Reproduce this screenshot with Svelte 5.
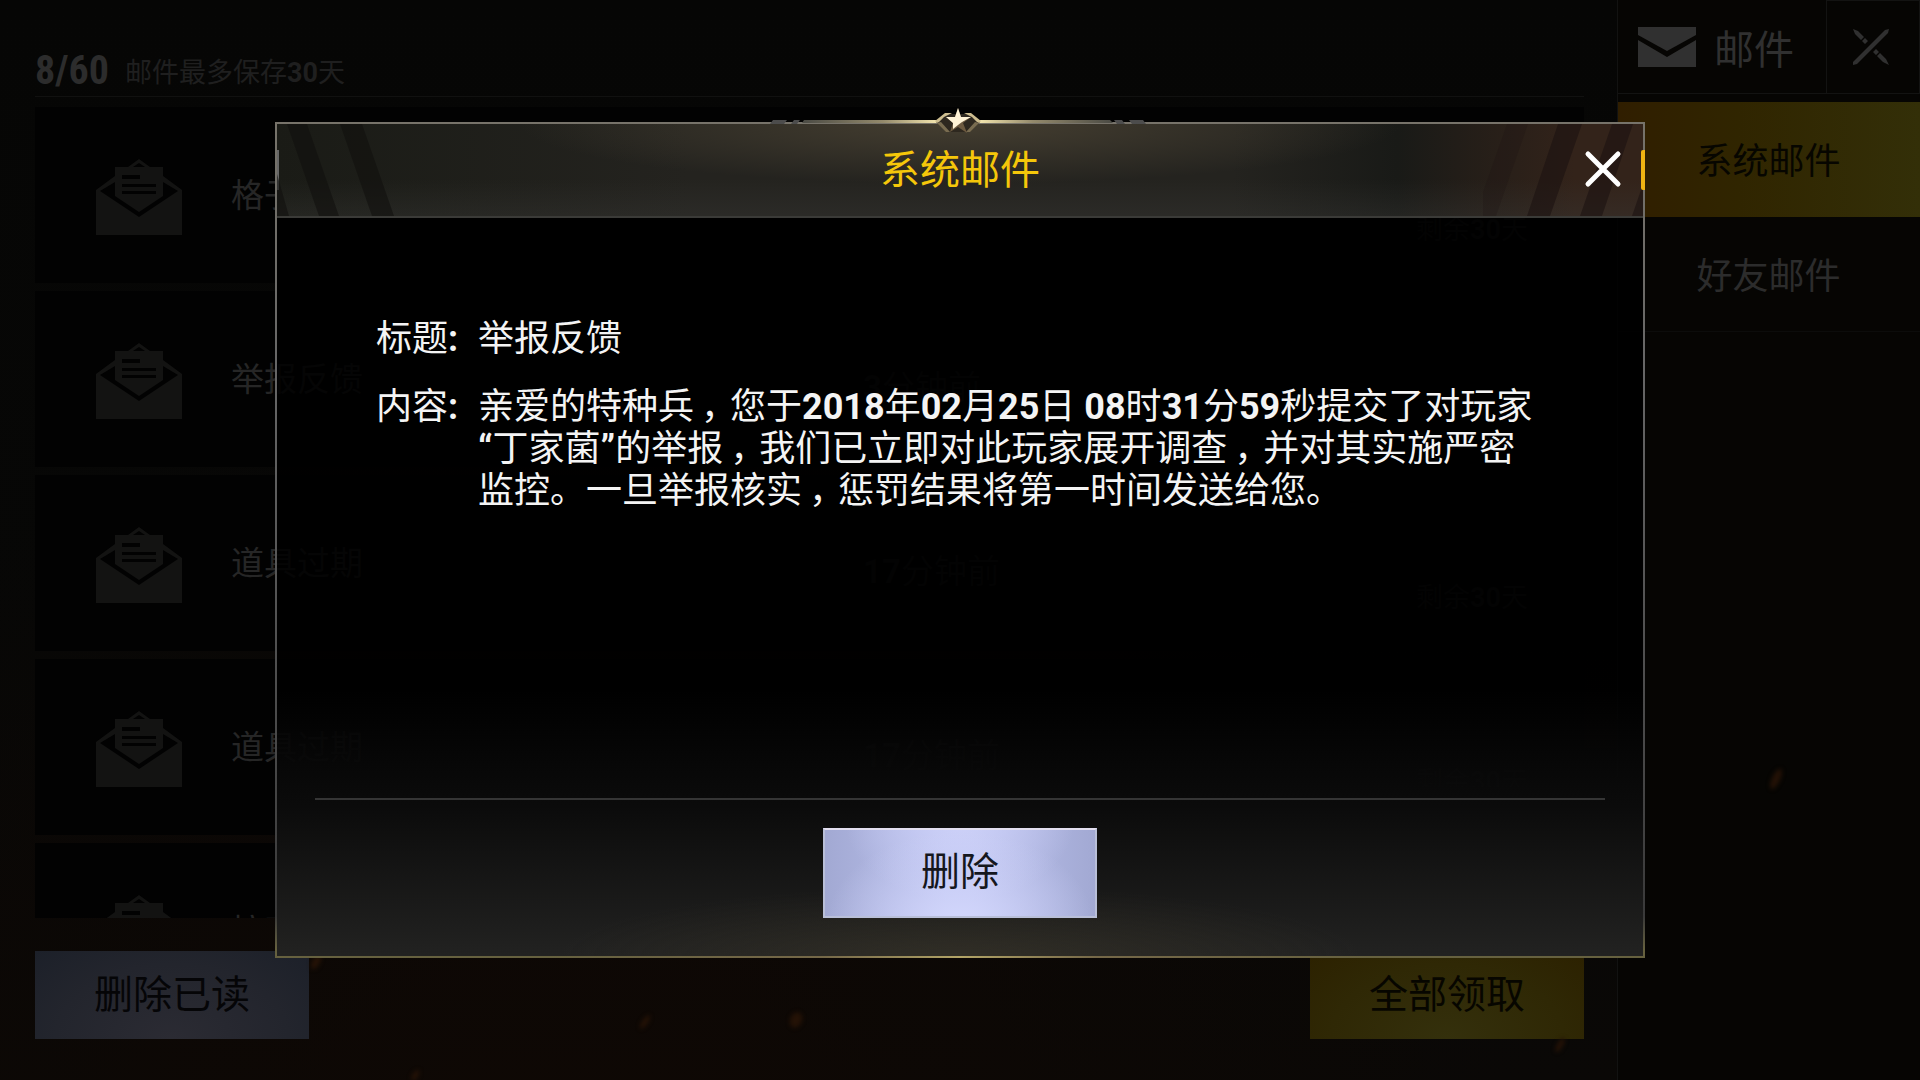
<script>
  const mails = [
    { title: '格子衬衫', time: '', left: '剩余30天' },
    { title: '举报反馈', time: '3分钟前', left: '' },
    { title: '道具过期', time: '17分钟前', left: '剩余30天' },
    { title: '道具过期', time: '17分钟前', left: '剩余30天' },
    { title: '按时领取', time: '', left: '' },
  ];

  const tabs = ['系统邮件', '好友邮件'];
  let active = $state(0);

  const body = [
    '亲爱的特种兵，您于2018年02月25日 08时31分59秒提交了对玩家',
    '“丁家菌”的举报，我们已立即对此玩家展开调查，并对其实施严密',
    '监控。一旦举报核实，惩罚结果将第一时间发送给您。',
  ];

  // digits and quotes use the bold latin face, commas sit mid-cell
  const split = (line) => line.split(/([ \d“”]+|，)/).filter(Boolean);
</script>

<div class="screen">
  <main class="inbox">
    <header class="count">
      <strong>8/60</strong>
      <span>邮件最多保存<b>30</b>天</span>
    </header>

    <ul class="list">
      {#each mails as mail}
        <li class="row">
          <svg class="letter" viewBox="0 0 86 76">
            <path d="M0 31 19 17v6L4 32l39 26 39-26-15-9v-6l19 14v45H0z" />
            <path d="M32 8 43 0l11 8h-5l-6-4-6 4z" />
            <path fill-rule="evenodd" d="M19 8h48v29L43 53 19 37zM26 16v4h18v-4zM26 25v3h34v-3zM26 32v3h34v-3z" />
          </svg>
          <span class="name">{mail.title}</span>
          <span class="time">{#each split(mail.time) as part}{#if /\d/.test(part)}<b>{part}</b>{:else}{part}{/if}{/each}</span>
          <span class="left">{#each split(mail.left) as part}{#if /\d/.test(part)}<b>{part}</b>{:else}{part}{/if}{/each}</span>
        </li>
      {/each}
    </ul>

    <footer class="actions">
      <button class="btn dim-blue">删除已读</button>
      <button class="btn dim-gold">全部领取</button>
    </footer>
  </main>

  <aside class="side">
    <div class="side-head">
      <h1>
        <svg width="58" height="40" viewBox="0 0 58 40">
          <path d="M0 0h58v8L29 24 0 8zM0 13l29 17 29-17v27H0z" />
        </svg>
        <span>邮件</span>
      </h1>
      <button class="exit" aria-label="关闭邮件">
        <svg width="38" height="38" viewBox="0 0 38 38">
          <path d="M1 34 33 2l4-1-1 4L5 36l-4 1z" />
          <path d="M1 1l5 2 6 6-3 3-6-6zM13 10l3 3-3 3-3-3zM24 21l3 3-3 3-3-3zM28 25l6 6 3 6-6-3-6-6z" />
        </svg>
      </button>
    </div>
    <nav>
      {#each tabs as tab, i}
        <button class="tab" class:active={active === i} onclick={() => (active = i)}>{tab}</button>
      {/each}
    </nav>
  </aside>

  <svg class="sparks" viewBox="0 0 1920 1080" preserveAspectRatio="none">
    <ellipse cx="1776" cy="779" rx="4" ry="11" transform="rotate(25 1776 779)" />
    <ellipse cx="796" cy="1020" rx="6" ry="8" transform="rotate(25 796 1020)" />
    <ellipse cx="645" cy="1022" rx="3" ry="8" transform="rotate(35 645 1022)" />
    <ellipse cx="316" cy="962" rx="4" ry="8" transform="rotate(30 316 962)" />
    <ellipse cx="415" cy="1076" rx="3" ry="7" transform="rotate(30 415 1076)" />
    <ellipse cx="1560" cy="1045" rx="3" ry="8" transform="rotate(30 1560 1045)" />
  </svg>

  <div class="overlay">
    <div class="modal" role="dialog" aria-labelledby="mail-title">
      <svg class="crest" width="380" height="30" viewBox="0 0 380 30">
        <defs>
          <linearGradient id="lineL"><stop offset="0" stop-color="#4a4a44" /><stop offset=".6" stop-color="#948a6c" /><stop offset="1" stop-color="#f4e6ae" /></linearGradient>
          <linearGradient id="lineR"><stop offset="0" stop-color="#f4e6ae" /><stop offset=".4" stop-color="#948a6c" /><stop offset="1" stop-color="#4a4a44" /></linearGradient>
        </defs>
        <path d="M2 16l3-4h14l-3 4zM23 16l3-4h6l-3 4zM378 16l-3-4h-14l3 4zM357 16l-3-4h-8l3 4z" fill="#4c4c4c" />
        <path d="M36 12h133v3H34z" fill="url(#lineL)" />
        <path d="M211 12h131l3 3H211z" fill="url(#lineR)" />
        <path d="M168 14l9-8h26l9 8-10 10h-24z" fill="#2e281f" />
        <path d="M167 13l10-8h7l-8 4-5 5-2 1zM213 13l-10-8h-7l8 4 5 5 2 1z" fill="#cdbd8f" />
        <path d="M169 15l9 9h4l-9-10zM211 15l-9 9h-4l9-10z" fill="#796c50" />
        <path d="M190 0l3 9 10 0-8 6 4 10-9-6-8 5 3-9-7-6h9z" fill="#6d5a40" />
        <path d="M190 0l3 9 10 0-9 5-4 3-5 4 0-6-7-6h9z" fill="#fff3d6" />
      </svg>
      <header class="modal-head">
        <svg class="stripes" width="140" height="92" viewBox="0 0 140 92">
          <path d="M10 0h20l32 92H42zM63 0h22l32 92H95zM0 50l12 42H0z" />
        </svg>
        <h2 id="mail-title">系统邮件</h2>
        <svg class="stripes right" width="160" height="92" viewBox="0 0 160 92">
          <path d="M24 0h21L13 92H0V68z" opacity=".4" />
          <path d="M75 0h24L67 92H44zM129 0h21l-31 92H97zM160 60v32h-11z" />
        </svg>
        <button class="close" aria-label="关闭">
          <svg width="38" height="38" viewBox="0 0 38 38">
            <path d="M4 4l30 30M34 4 4 34" />
          </svg>
        </button>
      </header>

      <dl class="mail">
        <dt>标题<b>:</b></dt>
        <dd>举报反馈</dd>
        <dt>内容<b>:</b></dt>
        <dd>
          {#each body as line}
            <p>{#each split(line) as part}{#if part === '，'}<span class="comma">，</span>{:else if /[\d“]|”/.test(part)}<b>{part}</b>{:else}{part}{/if}{/each}</p>
          {/each}
        </dd>
      </dl>

      <footer class="modal-foot">
        <button class="btn blue">删除</button>
      </footer>
    </div>
  </div>
</div>

<style>
  :global(body) {
    background: #060503;
  }
  .screen {
    position: relative;
    display: flex;
    height: 100vh;
    overflow: hidden;
    box-sizing: border-box;
    background:
      radial-gradient(ellipse at 30% 115%, #0f0804 0, transparent 50%),
      linear-gradient(#060605, #070706 60%, #0a0806);
    color: #2c2c2c;
    font-family: Roboto, 'Noto Sans CJK SC', sans-serif;
  }
  button {
    margin: 0;
    padding: 0;
    border: 0;
    background: none;
    color: inherit;
    font: inherit;
    cursor: pointer;
  }
  h1, h2, p, ul, dl, dd {
    margin: 0;
    padding: 0;
    font-weight: 400;
  }
  svg {
    display: block;
    fill: currentColor;
  }

  .inbox {
    flex: 1;
    display: flex;
    flex-direction: column;
    padding: 0 33px 41px 35px;
  }
  .count {
    display: flex;
    align-items: flex-end;
    gap: 16px;
    height: 96px;
    border-bottom: 1px solid #111110;
    font-size: 27px;
    line-height: 46px;
    color: #1f1f1f;
  }
  .count strong {
    font: 700 40px/50px 'Liberation Sans Narrow', 'Roboto Condensed', Roboto, sans-serif;
    color: #2c2c2c;
  }
  .list {
    flex: 1;
    min-height: 0;
    margin: 10px 0 33px;
    overflow: hidden;
    list-style: none;
  }
  .row {
    display: grid;
    grid-template-columns: 135px 632px 1fr 168px;
    align-items: center;
    height: 176px;
    margin-bottom: 8px;
    padding-left: 61px;
    background: #020202;
    font-size: 33px;
    color: #262626;
  }
  .letter {
    width: 86px;
    height: 76px;
    margin-top: 4px;
    color: #131312;
  }
  .name {
    padding-bottom: 4px;
  }
  .time {
    padding-top: 12px;
    color: #161616;
  }
  .left {
    padding-top: 64px;
    font-size: 27px;
    color: #161616;
  }
  .actions {
    display: flex;
    justify-content: space-between;
  }
  .btn {
    width: 274px;
    height: 88px;
    font-size: 39px;
    line-height: 84px;
  }
  .dim-blue {
    background: radial-gradient(ellipse at 50% 100%, #2b2b33, #23252d 60%, #1c2029);
    color: #050507;
  }
  .dim-gold {
    background: radial-gradient(ellipse at 50% 100%, #34300c, #2f2805 60%, #2c2100);
    color: #070600;
  }

  .side {
    width: 302px;
    border-left: 1px solid #121211;
    background: #060503;
  }
  .side-head {
    display: flex;
    height: 93px;
    margin-bottom: 8px;
    border-bottom: 1px solid #131312;
    color: #303030;
  }
  h1 {
    flex: 1;
    display: flex;
    align-items: center;
    gap: 18px;
    padding: 1px 0 0 20px;
    font-size: 40px;
  }
  .exit {
    display: grid;
    place-items: center;
    width: 94px;
    box-sizing: border-box;
    padding-right: 4px;
    border: 1px solid #131312;
    border-bottom: 0;
  }
  nav {
    display: flex;
    flex-direction: column;
  }
  .tab {
    height: 115px;
    padding: 0 1px 3px 0;
    border-bottom: 1px solid #0c0c0b;
    font-size: 36px;
  }
  .tab.active {
    border: 0;
    background: linear-gradient(90deg, #301e00, #302500 40%, #332f08);
    color: #070600;
  }

  .sparks {
    position: absolute;
    inset: 0;
    width: 100%;
    height: 100%;
    fill: #241206;
    filter: blur(2px);
    pointer-events: none;
  }
  .overlay {
    position: absolute;
    inset: 0;
    display: flex;
    justify-content: center;
    align-items: center;
  }
  .modal {
    position: relative;
    display: flex;
    flex-direction: column;
    width: 1370px;
    min-height: 836px;
    box-sizing: border-box;
    border: 2px solid;
    border-image: linear-gradient(#77736a, #666 30%, #3a3a3a 95%, #66613f 99%) 2;
    background:
      radial-gradient(ellipse 400px 70px at 50% 100%, #3d382a88, transparent),
      linear-gradient(transparent 68%, #0b0b0b 82%, #222221),
      #000000dd;
    color: #f4f4f4;
  }
  .modal::after {
    content: '';
    position: absolute;
    inset: auto 0 -2px;
    height: 2px;
    background: linear-gradient(90deg, transparent 20%, #756848 40%, #b3a567 50%, #756848 60%, transparent 80%);
  }
  .crest {
    position: absolute;
    top: -16px;
    left: 491px;
    z-index: 1;
  }
  .modal-head {
    position: relative;
    display: flex;
    justify-content: center;
    align-items: center;
    height: 92px;
    border-bottom: 2px solid #3b3b38;
    background:
      radial-gradient(ellipse 440px 60px at 50% 0, #4d4535cc, transparent),
      linear-gradient(transparent 60%, #3a3a3855),
      linear-gradient(90deg, #1a1b16, #24231f 30%, #24231f 70%, #191a17 82%, #33231a 95%);
  }
  .modal-head::before,
  .modal-head::after {
    content: '';
    position: absolute;
    top: 26px;
    left: 0;
    width: 2px;
    height: 40px;
    background: #666;
  }
  .modal-head::after {
    left: auto;
    right: -2px;
    width: 4px;
    border-radius: 2px 0 0 2px;
    background: #f0b412;
  }
  .stripes {
    position: absolute;
    top: 0;
    left: 0;
    fill: #11100e;
    opacity: 0.6;
  }
  .stripes.right {
    left: auto;
    right: 0;
    fill: #1c1211;
  }
  h2 {
    padding-top: 2px;
    font-size: 40px;
    line-height: 90px;
    color: #f5c70a;
  }
  .close {
    position: absolute;
    top: 26px;
    right: 21px;
  }
  .close path {
    stroke: #fff;
    stroke-width: 5;
    stroke-linecap: round;
  }

  .mail {
    flex: 1;
    display: grid;
    grid-template-columns: 102px 1fr;
    grid-template-rows: 68px 1fr;
    padding: 100px 60px 30px 99px;
    font-size: 36px;
    line-height: 42px;
  }
  .mail p {
    white-space: pre;
  }
  .comma {
    margin: 0 -7px 0 7px;
  }
  .modal-foot {
    display: flex;
    justify-content: center;
    margin: 0 38px;
    padding: 28px 0 38px;
    border-top: 2px solid #353535;
  }
  .blue {
    box-sizing: border-box;
    height: 90px;
    padding-bottom: 2px;
    border: 2px solid #b9bfd8;
    border-top-color: #e3dff0;
    background:
      radial-gradient(ellipse at 50% 110%, #d3d7fc, transparent 70%),
      radial-gradient(ellipse at 50% -10%, #cdd1f8, transparent 60%),
      linear-gradient(90deg, #a2a9d3, #bcc2ee 45%, #bcc2ee 55%, #a2a9d3);
    color: #15171d;
    line-height: 82px;
  }
</style>
